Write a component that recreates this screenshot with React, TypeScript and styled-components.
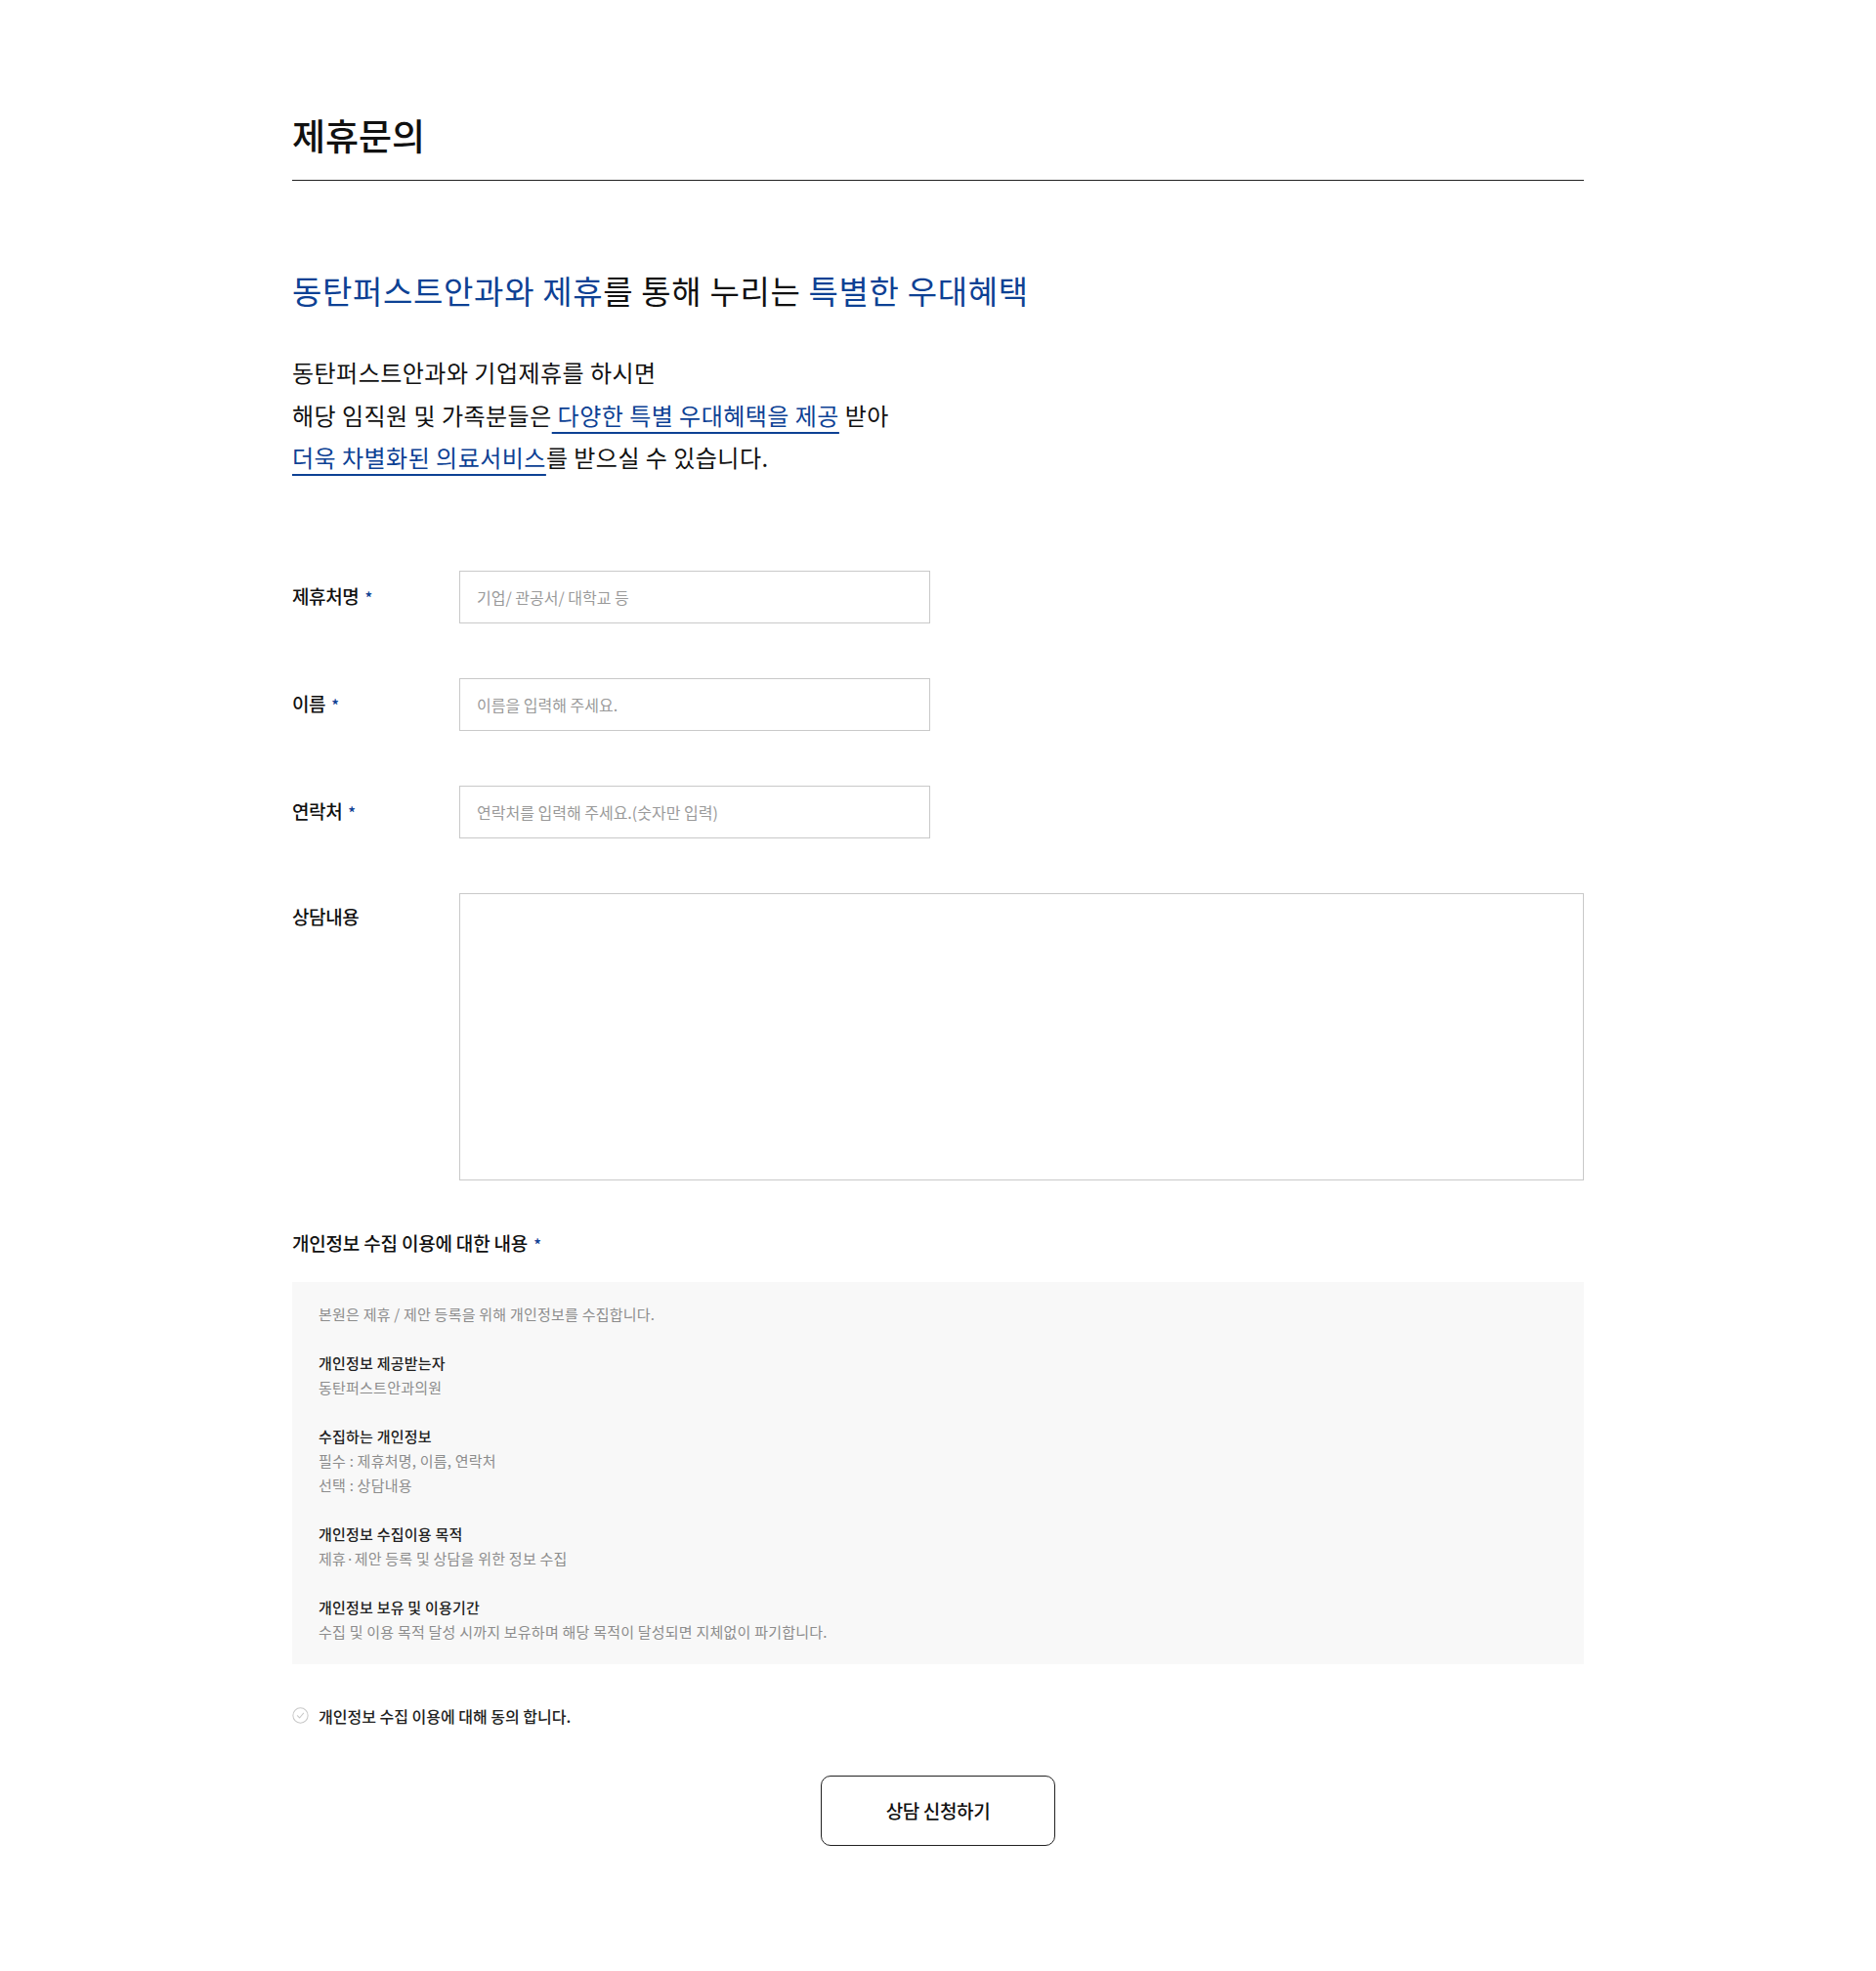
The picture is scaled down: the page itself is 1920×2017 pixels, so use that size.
import React from "react";
import styled, { createGlobalStyle } from "styled-components";

const GlobalStyle = createGlobalStyle`
  html, body {
    margin: 0;
    padding: 0;
    background: #fff;
  }
  body {
    font-family: "Noto Sans CJK KR", "Noto Sans", sans-serif;
    color: #222;
    -webkit-font-smoothing: antialiased;
  }
  * {
    box-sizing: border-box;
  }
`;

const BLUE = "#0d4194";

const Page = styled.main`
  width: 1322px;
  margin: 0 auto;
  padding: 115px 0 130px;
`;

const PageTitle = styled.h1`
  margin: 0;
  padding-bottom: 22px;
  border-bottom: 1px solid #222;
  font-size: 37px;
  line-height: 47px;
  font-weight: 500;
  color: #111;
`;

const Headline = styled.h2`
  margin: 91px 0 0;
  font-size: 33px;
  line-height: 42px;
  font-weight: 400;
  letter-spacing: 0.02em;
  color: #111;
`;

const Blue = styled.span`
  color: ${BLUE};
`;

const Intro = styled.p`
  margin: 41px 0 0;
  font-size: 24px;
  line-height: 43.5px;
  letter-spacing: 0.02em;
  color: #111;
`;

const Underlined = styled.span`
  color: ${BLUE};
  text-decoration: underline;
  text-decoration-thickness: 2px;
  text-underline-offset: 7px;
`;

const Form = styled.form`
  margin-top: 94px;
  display: flex;
  flex-direction: column;
  gap: 56px;
`;

const Row = styled.div<{ $top?: boolean }>`
  display: flex;
  align-items: ${(p) => (p.$top ? "flex-start" : "center")};
`;

const Label = styled.label<{ $top?: boolean }>`
  width: 171px;
  flex-shrink: 0;
  padding-top: ${(p) => (p.$top ? "10px" : "0")};
  font-size: 19px;
  line-height: 27px;
  font-weight: 500;
  letter-spacing: -0.02em;
  color: #111;
`;

const Star = styled.span`
  margin-left: 6px;
  color: ${BLUE};
  font-size: 16px;
`;

const Input = styled.input`
  width: 482px;
  height: 54px;
  padding: 0 17px;
  border: 1px solid #c9c9c9;
  border-radius: 0;
  font-family: inherit;
  font-size: 16px;
  color: #222;
  outline: none;
  &::placeholder {
    color: #9a9a9a;
  }
`;

const TextArea = styled.textarea`
  flex: 1;
  height: 294px;
  padding: 16px 17px;
  border: 1px solid #c9c9c9;
  border-radius: 0;
  font-family: inherit;
  font-size: 16px;
  resize: none;
  outline: none;
`;

const PrivacyTitle = styled.h3`
  margin: 50px 0 0;
  font-size: 19px;
  line-height: 27px;
  font-weight: 500;
  letter-spacing: -0.01em;
  color: #111;
`;

const PrivacyBox = styled.div`
  margin-top: 25px;
  padding: 20.5px 27px;
  background: #f8f8f8;
  display: flex;
  flex-direction: column;
  gap: 25px;
`;

const PrivacyGroup = styled.div`
  display: flex;
  flex-direction: column;
`;

const PrivacyLine = styled.p<{ $strong?: boolean }>`
  margin: 0;
  font-size: 15px;
  line-height: 25px;
  letter-spacing: 0.015em;
  font-weight: ${(p) => (p.$strong ? 500 : 400)};
  color: ${(p) => (p.$strong ? "#222" : "#8c8c8c")};
`;

const AgreeRow = styled.label`
  margin-top: 41px;
  display: flex;
  align-items: center;
  gap: 10px;
  font-size: 16px;
  line-height: 24px;
  font-weight: 500;
  color: #222;
  cursor: pointer;
`;

const CheckIcon = styled.svg`
  width: 17px;
  height: 17px;
  flex-shrink: 0;
`;

const SubmitWrap = styled.div`
  margin-top: 49px;
  display: flex;
  justify-content: center;
`;

const SubmitButton = styled.button`
  width: 240px;
  height: 72px;
  background: #fff;
  border: 1px solid #222;
  border-radius: 10px;
  font-family: inherit;
  font-size: 19px;
  font-weight: 500;
  letter-spacing: -0.02em;
  color: #111;
  cursor: pointer;
`;

const privacy = [
  { title: null, lines: ["본원은 제휴 / 제안 등록을 위해 개인정보를 수집합니다."] },
  { title: "개인정보 제공받는자", lines: ["동탄퍼스트안과의원"] },
  {
    title: "수집하는 개인정보",
    lines: ["필수 : 제휴처명, 이름, 연락처", "선택 : 상담내용"],
  },
  { title: "개인정보 수집이용 목적", lines: ["제휴·제안 등록 및 상담을 위한 정보 수집"] },
  {
    title: "개인정보 보유 및 이용기간",
    lines: ["수집 및 이용 목적 달성 시까지 보유하며 해당 목적이 달성되면 지체없이 파기합니다."],
  },
];

export default function App() {
  return (
    <>
      <GlobalStyle />
      <Page>
        <PageTitle>제휴문의</PageTitle>

        <Headline>
          <Blue>동탄퍼스트안과와 제휴</Blue>를 통해 누리는 <Blue>특별한 우대혜택</Blue>
        </Headline>

        <Intro>
          동탄퍼스트안과와 기업제휴를 하시면
          <br />
          해당 임직원 및 가족분들은<Underlined> 다양한 특별 우대혜택을 제공</Underlined> 받아
          <br />
          <Underlined>더욱 차별화된 의료서비스</Underlined>를 받으실 수 있습니다.
        </Intro>

        <Form onSubmit={(e) => e.preventDefault()}>
          <Row>
            <Label>
              제휴처명<Star>*</Star>
            </Label>
            <Input placeholder="기업/ 관공서/ 대학교 등" />
          </Row>
          <Row>
            <Label>
              이름<Star>*</Star>
            </Label>
            <Input placeholder="이름을 입력해 주세요." />
          </Row>
          <Row>
            <Label>
              연락처<Star>*</Star>
            </Label>
            <Input placeholder="연락처를 입력해 주세요.(숫자만 입력)" />
          </Row>
          <Row $top>
            <Label $top>상담내용</Label>
            <TextArea />
          </Row>
        </Form>

        <PrivacyTitle>
          개인정보 수집 이용에 대한 내용<Star>*</Star>
        </PrivacyTitle>
        <PrivacyBox>
          {privacy.map((group, i) => (
            <PrivacyGroup key={i}>
              {group.title && <PrivacyLine $strong>{group.title}</PrivacyLine>}
              {group.lines.map((line) => (
                <PrivacyLine key={line}>{line}</PrivacyLine>
              ))}
            </PrivacyGroup>
          ))}
        </PrivacyBox>

        <AgreeRow>
          <CheckIcon viewBox="0 0 20 20" fill="none">
            <circle cx="10" cy="10" r="9" stroke="#c8c8c8" strokeWidth="1.2" />
            <path d="M6.3 10.2l2.6 2.7 4.8-5.6" stroke="#c8c8c8" strokeWidth="1.2" strokeLinecap="round" strokeLinejoin="round" />
          </CheckIcon>
          개인정보 수집 이용에 대해 동의 합니다.
        </AgreeRow>

        <SubmitWrap>
          <SubmitButton type="submit">상담 신청하기</SubmitButton>
        </SubmitWrap>
      </Page>
    </>
  );
}
